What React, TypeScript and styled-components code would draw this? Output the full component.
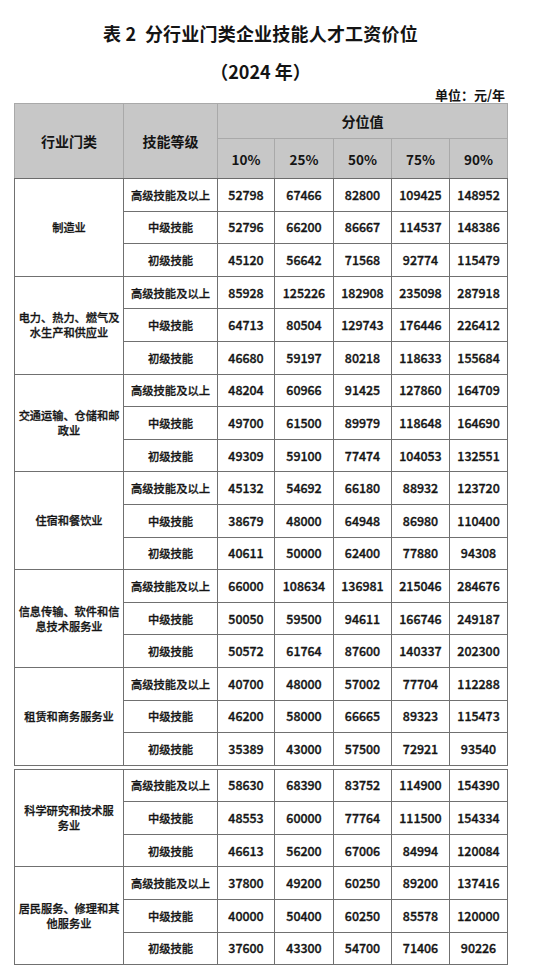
import React from 'react';
import styled, { createGlobalStyle } from 'styled-components';

const GlobalStyle = createGlobalStyle`
  html, body {
    margin: 0;
    padding: 0;
    background: #ffffff;
  }
  body {
    font-family: "Noto Sans CJK SC", "Noto Sans", sans-serif;
    color: #141414;
  }
`;

const Page = styled.div`
  width: 493px;
  margin-left: 14px;
  padding-top: 21px;
`;

const Title = styled.h1`
  margin: 0;
  font-size: 18px;
  line-height: 24px;
  font-weight: 700;
  text-align: center;
  letter-spacing: 0.2px;
`;

const SubTitle = styled.div`
  margin-top: 14px;
  font-size: 18px;
  line-height: 24px;
  font-weight: 700;
  text-align: center;
`;

const Unit = styled.div`
  margin-top: 4px;
  padding-right: 2px;
  font-size: 13px;
  line-height: 16px;
  font-weight: 700;
  text-align: right;
`;

const Sheet = styled.table<{ $gap?: boolean }>`
  width: 493px;
  table-layout: fixed;
  border-collapse: collapse;
  margin-top: ${p => (p.$gap ? '3px' : '0')};
  border: 1px solid #6c6c6c;
`;

const HeadRow = styled.tr<{ $h: number }>`
  height: ${p => p.$h}px;
`;

const HeadCell = styled.th<{ $span?: boolean }>`
  background: #c7c7c7;
  border: 1px solid #a9a9a9;
  border-bottom-color: ${p => (p.$span ? '#6c6c6c' : '#a9a9a9')};
  font-size: 14px;
  font-weight: 700;
  text-align: center;
  vertical-align: middle;
  padding: 0;
`;

const Percent = styled(HeadCell)`
  font-size: 13.5px;
  border-bottom: 1px solid #6c6c6c;
`;

const Row = styled.tr`
  height: 32.6px;
`;

const Cell = styled.td`
  border: 1px solid #707070;
  padding: 0;
  text-align: center;
  vertical-align: middle;
  white-space: nowrap;
  font-weight: 500;
  -webkit-text-stroke: 0.3px #141414;
`;

const Industry = styled(Cell)`
  font-size: 11.2px;
  line-height: 15px;
`;

const Level = styled(Cell)`
  font-size: 11.3px;
`;

const Num = styled(Cell)`
  font-size: 12.4px;
  -webkit-text-stroke: 0.35px #141414;
`;

type Group = {
  name: string[];
  rows: number[][];
};

const levels = ['高级技能及以上', '中级技能', '初级技能'];

const topGroups: Group[] = [
  {
    name: ['制造业'],
    rows: [
      [52798, 67466, 82800, 109425, 148952],
      [52796, 66200, 86667, 114537, 148386],
      [45120, 56642, 71568, 92774, 115479],
    ],
  },
  {
    name: ['电力、热力、燃气及', '水生产和供应业'],
    rows: [
      [85928, 125226, 182908, 235098, 287918],
      [64713, 80504, 129743, 176446, 226412],
      [46680, 59197, 80218, 118633, 155684],
    ],
  },
  {
    name: ['交通运输、仓储和邮', '政业'],
    rows: [
      [48204, 60966, 91425, 127860, 164709],
      [49700, 61500, 89979, 118648, 164690],
      [49309, 59100, 77474, 104053, 132551],
    ],
  },
  {
    name: ['住宿和餐饮业'],
    rows: [
      [45132, 54692, 66180, 88932, 123720],
      [38679, 48000, 64948, 86980, 110400],
      [40611, 50000, 62400, 77880, 94308],
    ],
  },
  {
    name: ['信息传输、软件和信', '息技术服务业'],
    rows: [
      [66000, 108634, 136981, 215046, 284676],
      [50050, 59500, 94611, 166746, 249187],
      [50572, 61764, 87600, 140337, 202300],
    ],
  },
  {
    name: ['租赁和商务服务业'],
    rows: [
      [40700, 48000, 57002, 77704, 112288],
      [46200, 58000, 66665, 89323, 115473],
      [35389, 43000, 57500, 72921, 93540],
    ],
  },
];

const bottomGroups: Group[] = [
  {
    name: ['科学研究和技术服', '务业'],
    rows: [
      [58630, 68390, 83752, 114900, 154390],
      [48553, 60000, 77764, 111500, 154334],
      [46613, 56200, 67006, 84994, 120084],
    ],
  },
  {
    name: ['居民服务、修理和其', '他服务业'],
    rows: [
      [37800, 49200, 60250, 89200, 137416],
      [40000, 50400, 60250, 85578, 120000],
      [37600, 43300, 54700, 71406, 90226],
    ],
  },
];

const widths = [109, 94, 57, 59, 58, 58, 58];

function Cols() {
  return (
    <colgroup>
      {widths.map((w, i) => (
        <col key={i} style={{ width: w }} />
      ))}
    </colgroup>
  );
}

function GroupRows({ group }: { group: Group }) {
  return (
    <>
      {group.rows.map((vals, i) => (
        <Row key={i}>
          {i === 0 && (
            <Industry rowSpan={3}>
              {group.name.map((line, j) => (
                <div key={j}>{line}</div>
              ))}
            </Industry>
          )}
          <Level>{levels[i]}</Level>
          {vals.map((v, k) => (
            <Num key={k}>{v}</Num>
          ))}
        </Row>
      ))}
    </>
  );
}

export default function App() {
  return (
    <>
      <GlobalStyle />
      <Page>
        <Title>表 2&nbsp; 分行业门类企业技能人才工资价位</Title>
        <SubTitle>（2024 年）</SubTitle>
        <Unit>单位：元/年</Unit>
        <Sheet>
          <Cols />
          <thead>
            <HeadRow $h={35}>
              <HeadCell rowSpan={2} $span>行业门类</HeadCell>
              <HeadCell rowSpan={2} $span>技能等级</HeadCell>
              <HeadCell colSpan={5}>分位值</HeadCell>
            </HeadRow>
            <HeadRow $h={40}>
              {['10%', '25%', '50%', '75%', '90%'].map(p => (
                <Percent key={p}>{p}</Percent>
              ))}
            </HeadRow>
          </thead>
          <tbody>
            {topGroups.map(g => (
              <GroupRows key={g.name.join('')} group={g} />
            ))}
          </tbody>
        </Sheet>
        <Sheet $gap>
          <Cols />
          <tbody>
            {bottomGroups.map(g => (
              <GroupRows key={g.name.join('')} group={g} />
            ))}
          </tbody>
        </Sheet>
      </Page>
    </>
  );
}
